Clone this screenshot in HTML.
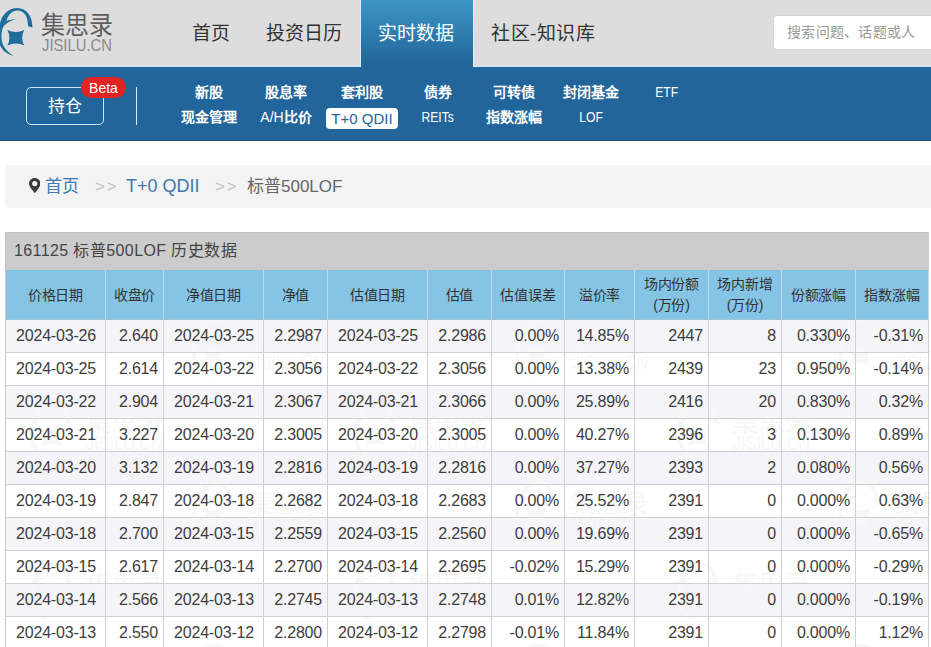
<!DOCTYPE html>
<html lang="zh-CN">
<head>
<meta charset="utf-8">
<style>
*{box-sizing:border-box;margin:0;padding:0}
html,body{width:931px;height:647px;overflow:hidden;background:#fff}
body{font-family:"Liberation Sans",sans-serif;color:#333;position:relative}
.top{position:absolute;left:0;top:0;width:931px;height:67px;background:#dddddd;border-bottom:1px solid #d3e5f0}
.logo{position:absolute;left:0;top:0}
.logo-cn{position:absolute;left:41px;top:7px;font-size:24px;line-height:36px;color:#5e5e5e;font-weight:300;transform-origin:0 0;transform:scaleY(1.05)}
.logo-en{position:absolute;left:42px;top:37px;font-size:17px;line-height:17px;color:#8a8a8a;transform-origin:0 0;transform:scaleX(0.87)}
.tab{position:absolute;top:0;height:67px;line-height:67px;font-size:19px;color:#333}
.tab.active{background:linear-gradient(#3c96c6,#216498);color:#fff;left:361px;width:112px;text-align:center;padding-right:2px;box-shadow:-1px 0 #e4edf3,1px 0 #e4edf3}
.search{position:absolute;left:773px;top:15px;width:170px;height:35px;background:#fff;border:1px solid #d6d6d6;border-radius:4px}
.search span{position:absolute;left:13px;top:0;line-height:33px;font-size:14px;color:#999;letter-spacing:.3px;white-space:nowrap}
.nav{position:absolute;left:0;top:67px;width:931px;height:74px;background:#22659a;border-bottom:1px solid #1b5583}
.btn{position:absolute;left:26px;top:20px;width:78px;height:38px;border:1px solid #cfe6f5;border-radius:5px;color:#fff;font-size:17px;text-align:center;line-height:37px}
.beta{position:absolute;left:81px;top:10px;width:45px;height:21px;border-radius:11px;background:#e12323;color:#fff;font-size:15px;line-height:22px;text-align:center}
.beta span{display:inline-block;transform:scaleX(.93)}
.sep{position:absolute;left:136px;top:20px;width:1px;height:38px;background:#dbeaf5}
.sub{position:absolute;width:76px;text-align:center;font-size:14px;font-weight:bold;color:#fff;line-height:20px}
.sub.sel span{display:inline-block;height:21px;line-height:22px;vertical-align:top;margin-top:1px;background:#fff;color:#22659a;border-radius:4px;padding:0 5px;font-weight:normal;font-size:15px}
.sub .l{font-weight:normal;font-size:15.5px;display:inline-block;transform:scaleX(.78)}
.crumb{position:absolute;left:5px;top:165px;width:940px;height:43px;background:#f3f3f3;border-radius:4px;font-size:17px;line-height:43px}
.crumb .a{position:absolute;color:#4378ae}
.crumb .g{position:absolute;color:#c2c2c2;letter-spacing:1.5px}
.crumb .t{position:absolute;color:#666}
.tbl{position:absolute;left:5px;top:232px;width:924px}
.title{height:38px;background:#cccccc;border-left:1px solid #c2c2c2;border-top:1px solid #c2c2c2;font-size:16px;line-height:35px;padding-left:8px;color:#444;letter-spacing:.4px}
.grid{display:grid;grid-template-columns:100px 58px 100px 64px 100px 64px 73px 70px 74px 73px 74px 73px;border-left:1px solid #c8c8c8}
.grid div{border-right:1px solid #d0d0d0;border-bottom:1px solid #d0d0d0;height:33px;line-height:32px;font-size:16px;text-align:right;padding-right:5px;color:#3d3d3d;white-space:nowrap;letter-spacing:-.2px}
.grid .h{background:#85c4e5;height:50px;border-right-color:#b9dcef;border-bottom-color:#9cc3d7;text-align:center;padding:0;font-size:14px;display:flex;align-items:center;justify-content:center;line-height:21px;color:#333}
.grid .h1{padding-top:2px}
.grid .c{text-align:center;padding-right:0;padding-left:1px}
.grid .o{background:transparent}
.stripes{position:absolute;left:6px;top:320px;width:922px;height:330px;background:repeating-linear-gradient(#f4f4f9 0,#f4f4f9 33px,#fff 33px,#fff 66px)}
.wmk{position:absolute;left:0;top:0}
</style>
</head>
<body>
<div class="top">
  <svg class="logo" width="40" height="62" viewBox="0 0 40 62">
    <path fill="#1f6d9c" d="M32.4,27.5 C32.8,17 27,7.9 17.3,7.9 C9,7.9 3,14 1,20 C-1.5,27 -2,35 -1,41 C0,49 6,54 13.8,55.8 C8,52.5 3,47 1.8,41 C1,36 1.5,30 3.5,26.5 C6,23.5 10,20.5 16.2,19.6 C12,19.4 9,20 6.5,21 C8,15 12,10.5 17.3,10.5 C23,10.5 26.8,15 27.5,21 C27.8,24 28.2,26 28.5,26.6 Z"/>
    <path fill="#1f6d9c" d="M7.4,30 Q16,34 24.2,30 Q20.2,37.75 24.2,45.5 Q16,41.5 7.4,45.5 Q11.4,37.75 7.4,30 Z"/>
  </svg>
  <div class="logo-cn">集思录</div>
  <div class="logo-en">JISILU.CN</div>
  <div class="tab" style="left:192px">首页</div>
  <div class="tab" style="left:266px">投资日历</div>
  <div class="tab active">实时数据</div>
  <div class="tab" style="left:491px;letter-spacing:.5px">社区-知识库</div>
  <div class="search"><span>搜索问题、话题或人</span></div>
</div>
<div class="nav">
  <div class="btn">持仓</div>
  <div class="beta"><span>Beta</span></div>
  <div class="sep"></div>
  <div class="sub" style="left:171px;top:15px">新股</div>
  <div class="sub" style="left:248px;top:15px">股息率</div>
  <div class="sub" style="left:324px;top:15px">套利股</div>
  <div class="sub" style="left:400px;top:15px">债券</div>
  <div class="sub" style="left:476px;top:15px">可转债</div>
  <div class="sub" style="left:553px;top:15px">封闭基金</div>
  <div class="sub" style="left:629px;top:15px"><span class="l">ETF</span></div>
  <div class="sub" style="left:171px;top:40px">现金管理</div>
  <div class="sub" style="left:248px;top:40px"><span style="font-weight:normal">A/H</span>比价</div>
  <div class="sub sel" style="left:324px;top:40px"><span>T+0 QDII</span></div>
  <div class="sub" style="left:400px;top:40px"><span class="l">REITs</span></div>
  <div class="sub" style="left:476px;top:40px">指数涨幅</div>
  <div class="sub" style="left:553px;top:40px"><span class="l">LOF</span></div>
</div>
<div class="crumb">
  <svg style="position:absolute;left:23.5px;top:12.8px" width="11.5" height="15" viewBox="0 0 11.5 15"><path fill="#3a3a3a" fill-rule="evenodd" d="M5.75,0 C2.6,0 0,2.5 0,5.6 C0,9 5.75,15 5.75,15 C5.75,15 11.5,9 11.5,5.6 C11.5,2.5 8.9,0 5.75,0 Z M5.75,3 A2.6,2.6 0 1 1 5.75,8.2 A2.6,2.6 0 1 1 5.75,3 Z"/></svg>
  <span class="a" style="left:40px">首页</span>
  <span class="g" style="left:90px">&gt;&gt;</span>
  <span class="a" style="left:121px;font-size:18px">T+0 QDII</span>
  <span class="g" style="left:210px">&gt;&gt;</span>
  <span class="t" style="left:242px">标普500LOF</span>
</div>
<div class="stripes"></div>
<svg class="wmk" width="931" height="647" font-family="Liberation Sans, sans-serif" fill="#f7f7f8">
<defs><symbol id="wm" overflow="visible">
<g transform="translate(-7,-2) scale(1.1)"><path d="M32.4,27.5 C32.8,17 27,7.9 17.3,7.9 C9,7.9 3,14 1,20 C-1.5,27 -2,35 -1,41 C0,49 6,54 13.8,55.8 C8,52.5 3,47 1.8,41 C1,36 1.5,30 3.5,26.5 C6,23.5 10,20.5 16.2,19.6 C12,19.4 9,20 6.5,21 C8,15 12,10.5 17.3,10.5 C23,10.5 26.8,15 27.5,21 C27.8,24 28.2,26 28.5,26.6 Z"/>
<path d="M7.4,30 Q16,34 24.2,30 Q20.2,37.75 24.2,45.5 Q16,41.5 7.4,45.5 Q11.4,37.75 7.4,30 Z"/></g>
<text x="41" y="35" font-size="24">集思录</text>
<text x="42" y="51.5" font-size="19" textLength="70" lengthAdjust="spacingAndGlyphs">JISILU.CN</text>
</symbol></defs>
<use href="#wm" transform="translate(-122.0,312.1) scale(1.1)"/>
<use href="#wm" transform="translate(-122.0,474.1) scale(1.1)"/>
<use href="#wm" transform="translate(-122.0,636.1) scale(1.1)"/>
<use href="#wm" transform="translate(39.8,231.1) scale(1.1)"/>
<use href="#wm" transform="translate(39.8,393.1) scale(1.1)"/>
<use href="#wm" transform="translate(39.8,555.1) scale(1.1)"/>
<use href="#wm" transform="translate(201.6,312.1) scale(1.1)"/>
<use href="#wm" transform="translate(201.6,474.1) scale(1.1)"/>
<use href="#wm" transform="translate(201.6,636.1) scale(1.1)"/>
<use href="#wm" transform="translate(363.3,231.1) scale(1.1)"/>
<use href="#wm" transform="translate(363.3,393.1) scale(1.1)"/>
<use href="#wm" transform="translate(363.3,555.1) scale(1.1)"/>
<use href="#wm" transform="translate(525.0,312.1) scale(1.1)"/>
<use href="#wm" transform="translate(525.0,474.1) scale(1.1)"/>
<use href="#wm" transform="translate(525.0,636.1) scale(1.1)"/>
<use href="#wm" transform="translate(686.8,231.1) scale(1.1)"/>
<use href="#wm" transform="translate(686.8,393.1) scale(1.1)"/>
<use href="#wm" transform="translate(686.8,555.1) scale(1.1)"/>
<use href="#wm" transform="translate(848.5,312.1) scale(1.1)"/>
<use href="#wm" transform="translate(848.5,474.1) scale(1.1)"/>
<use href="#wm" transform="translate(848.5,636.1) scale(1.1)"/>
</svg>
<div class="tbl">
  <div class="title">161125 标普500LOF 历史数据</div>
  <div class="grid" id="g">
    <div class="h h1">价格日期</div><div class="h h1">收盘价</div><div class="h h1">净值日期</div><div class="h h1">净值</div><div class="h h1">估值日期</div><div class="h h1">估值</div><div class="h h1">估值误差</div><div class="h h1">溢价率</div><div class="h h2">场内份额<br>(万份)</div><div class="h h2">场内新增<br>(万份)</div><div class="h h1">份额涨幅</div><div class="h h1">指数涨幅</div>
    <div class="c o">2024-03-26</div><div class="o">2.640</div><div class="c o">2024-03-25</div><div class="o">2.2987</div><div class="c o">2024-03-25</div><div class="o">2.2986</div><div class="o">0.00%</div><div class="o">14.85%</div><div class="o">2447</div><div class="o">8</div><div class="o">0.330%</div><div class="o">-0.31%</div>
    <div class="c">2024-03-25</div><div>2.614</div><div class="c">2024-03-22</div><div>2.3056</div><div class="c">2024-03-22</div><div>2.3056</div><div>0.00%</div><div>13.38%</div><div>2439</div><div>23</div><div>0.950%</div><div>-0.14%</div>
    <div class="c o">2024-03-22</div><div class="o">2.904</div><div class="c o">2024-03-21</div><div class="o">2.3067</div><div class="c o">2024-03-21</div><div class="o">2.3066</div><div class="o">0.00%</div><div class="o">25.89%</div><div class="o">2416</div><div class="o">20</div><div class="o">0.830%</div><div class="o">0.32%</div>
    <div class="c">2024-03-21</div><div>3.227</div><div class="c">2024-03-20</div><div>2.3005</div><div class="c">2024-03-20</div><div>2.3005</div><div>0.00%</div><div>40.27%</div><div>2396</div><div>3</div><div>0.130%</div><div>0.89%</div>
    <div class="c o">2024-03-20</div><div class="o">3.132</div><div class="c o">2024-03-19</div><div class="o">2.2816</div><div class="c o">2024-03-19</div><div class="o">2.2816</div><div class="o">0.00%</div><div class="o">37.27%</div><div class="o">2393</div><div class="o">2</div><div class="o">0.080%</div><div class="o">0.56%</div>
    <div class="c">2024-03-19</div><div>2.847</div><div class="c">2024-03-18</div><div>2.2682</div><div class="c">2024-03-18</div><div>2.2683</div><div>0.00%</div><div>25.52%</div><div>2391</div><div>0</div><div>0.000%</div><div>0.63%</div>
    <div class="c o">2024-03-18</div><div class="o">2.700</div><div class="c o">2024-03-15</div><div class="o">2.2559</div><div class="c o">2024-03-15</div><div class="o">2.2560</div><div class="o">0.00%</div><div class="o">19.69%</div><div class="o">2391</div><div class="o">0</div><div class="o">0.000%</div><div class="o">-0.65%</div>
    <div class="c">2024-03-15</div><div>2.617</div><div class="c">2024-03-14</div><div>2.2700</div><div class="c">2024-03-14</div><div>2.2695</div><div>-0.02%</div><div>15.29%</div><div>2391</div><div>0</div><div>0.000%</div><div>-0.29%</div>
    <div class="c o">2024-03-14</div><div class="o">2.566</div><div class="c o">2024-03-13</div><div class="o">2.2745</div><div class="c o">2024-03-13</div><div class="o">2.2748</div><div class="o">0.01%</div><div class="o">12.82%</div><div class="o">2391</div><div class="o">0</div><div class="o">0.000%</div><div class="o">-0.19%</div>
    <div class="c">2024-03-13</div><div>2.550</div><div class="c">2024-03-12</div><div>2.2800</div><div class="c">2024-03-12</div><div>2.2798</div><div>-0.01%</div><div>11.84%</div><div>2391</div><div>0</div><div>0.000%</div><div>1.12%</div>
  </div>
</div>
</body>
</html>
